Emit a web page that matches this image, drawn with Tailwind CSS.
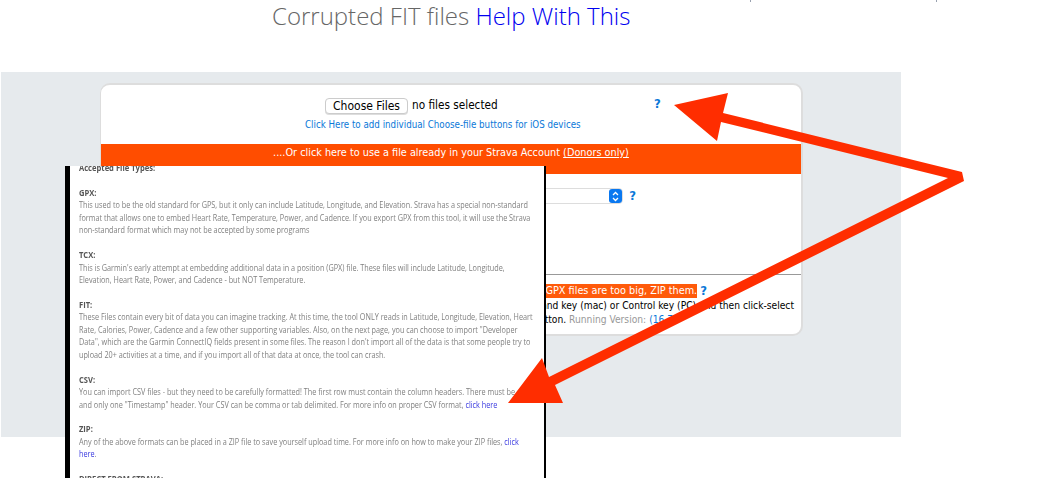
<!DOCTYPE html>
<html lang="en">
<head>
    <meta charset="UTF-8">
    <title>Corrupted FIT files</title>
    <script src="https://cdn.jsdelivr.net/npm/@tailwindcss/browser@4"></script>
</head>
<body class="bg-white h-[478px] overflow-hidden relative font-['DejaVu_Sans',sans-serif]">
    <!-- top of the page -->
    <span class="absolute left-[750px] top-0 w-px h-[2px] bg-gray-400"></span>
    <span class="absolute left-[936px] top-0 w-px h-[2px] bg-gray-400"></span>
    <h1 class="h-[72px] pl-[272px] font-['Open_Sans',sans-serif] font-light text-[24px] leading-[31px] text-[#666]">Corrupted FIT files <a href="#" class="text-[#0000f0]">Help With This</a></h1>

    <section class="ml-[1px] w-[900px] h-[365px] bg-[#e6eaed] pt-[11px] pl-[99px]">
        <div class="w-[703px] h-[253px] bg-white border-2 border-l border-[#ddd] rounded-[10px] overflow-hidden font-stretch-condensed">
            <div class="h-[59px] flex flex-col pt-[12px] relative">
                <div class="flex items-center gap-[4px] pl-[224px] text-[11.7px] text-black">
                    <button class="w-[83px] h-[16px] bg-white border border-[#ccc] rounded-[4px] text-[12px] leading-[14px] shadow-[0_1px_0_#ddd]">Choose Files</button>
                    <span>no files selected</span>
                </div>
                <a href="#" class="mt-[3px] pl-[204px] text-[9.7px] leading-[14px] text-[#0a78d8]">Click Here to add individual Choose-file buttons for iOS devices</a>
                <span class="absolute left-[553px] top-[11px] text-[13px] leading-[16px] font-bold text-[#0a78d8]">?</span>
            </div>
            <div class="h-[30px] bg-[#ff4d00] text-center text-white text-[10.8px] leading-[17px]">....Or click here to use a file already in your Strava Account <a href="#" class="underline">(Donors only)</a></div>
            <div class="h-[100px] pt-[14px] flex justify-end items-start pr-[165px] gap-[6px]">
                <div class="w-[120px] h-[16px] bg-white border border-[#ddd] rounded-[4px] flex justify-end">
                    <span class="w-[13px] h-[14px] bg-[#0a78f0] rounded-[3px] flex items-center justify-center">
                        <svg width="7" height="11" viewBox="0 0 7 11" fill="none" stroke="white" stroke-width="1.3"><path d="M1 4 L3.5 1.5 L6 4 M1 7 L3.5 9.5 L6 7"/></svg>
                    </span>
                </div>
                <span class="text-[13px] leading-[16px] font-bold text-[#0a78d8]">?</span>
            </div>
            <div class="border-t border-[#999] pt-[9px] text-[10.2px] leading-[14px] text-black">
                <div class="flex justify-end items-center pr-[94px] gap-[3px] h-[14px]">
                    <span class="bg-[#ff5a0a] text-white text-[10.8px]">Large GPX files are too big, ZIP them.</span>
                    <span class="text-[13px] font-bold text-[#0a78d8]">?</span>
                </div>
                <div class="mt-[1px] text-right pr-[7px]">Hold down the Command key (mac) or Control key (PC) and then click-select</div>
                <div class="pl-[432px]">button. <span class="text-[#999]">Running Version:</span> <a href="#" class="text-[#0a78d8]">(16.7)</a></div>
            </div>
        </div>
    </section>

    <!-- pasted help panel lying over the page, squeezed horizontally like the pasted image -->
    <div class="absolute left-[65px] top-[166px] w-[481px] h-[312px] bg-white border-l-[5px] border-r-2 border-black overflow-hidden">
        <div class="blur-[0.3px] origin-left scale-x-[0.845] pl-[10.6px] -mt-[4px] whitespace-nowrap font-['Open_Sans',sans-serif] text-[8.6px] leading-[12.45px] text-[#808080]">
            <p class="font-bold text-[#555] text-[9px]">Accepted File Types:</p>
            <p class="mt-[12.45px] font-bold text-[#555] text-[9px]">GPX:</p>
            <p>This used to be the old standard for GPS, but it only can include Latitude, Longitude, and Elevation. Strava has a special non-standard<br>format that allows one to embed Heart Rate, Temperature, Power, and Cadence. If you export GPX from this tool, it will use the Strava<br>non-standard format which may not be accepted by some programs</p>
            <p class="mt-[12.45px] font-bold text-[#555] text-[9px]">TCX:</p>
            <p>This is Garmin's early attempt at embedding additional data in a position (GPX) file. These files will include Latitude, Longitude,<br>Elevation, Heart Rate, Power, and Cadence - but NOT Temperature.</p>
            <p class="mt-[12.45px] font-bold text-[#555] text-[9px]">FIT:</p>
            <p>These Files contain every bit of data you can imagine tracking. At this time, the tool ONLY reads in Latitude, Longitude, Elevation, Heart<br>Rate, Calories, Power, Cadence and a few other supporting variables. Also, on the next page, you can choose to import "Developer<br>Data", which are the Garmin ConnectIQ fields present in some files. The reason I don't import all of the data is that some people try to<br>upload 20+ activities at a time, and if you import all of that data at once, the tool can crash.</p>
            <p class="mt-[12.45px] font-bold text-[#555] text-[9px]">CSV:</p>
            <p>You can import CSV files - but they need to be carefully formatted! The first row must contain the column headers. There must be one<br>and only one "Timestamp" header. Your CSV can be comma or tab delimited. For more info on proper CSV format, <a href="#" class="text-[#3a3ae0]">click here</a></p>
            <p class="mt-[12.45px] font-bold text-[#555] text-[9px]">ZIP:</p>
            <p>Any of the above formats can be placed in a ZIP file to save yourself upload time. For more info on how to make your ZIP files, <a href="#" class="text-[#3a3ae0]">click<br>here</a>.</p>
            <p class="mt-[12.45px] font-bold text-[#555] text-[9px]">DIRECT FROM STRAVA:</p>
        </div>
    </div>

    <!-- red arrows -->
    <svg class="absolute left-0 top-0 pointer-events-none" width="1057" height="478" viewBox="0 0 1057 478">
        <path fill="#ff2d00" d="M674 105 L728 93 L723 113 L962 172 L964 181 L555 385 L563 403 L508 403 L542 358 L549 377 L948 178 L721 122 L717 141 Z"/>
    </svg>
</body>
</html>
